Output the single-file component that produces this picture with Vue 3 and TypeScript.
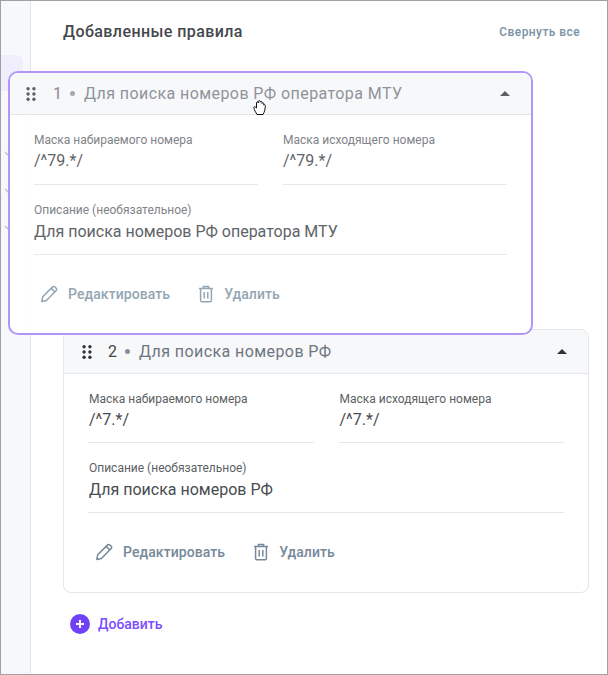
<script setup lang="ts">
interface Rule {
  id: number
  dialed: string
  outgoing: string
  description: string
  dragging: boolean
}

const rules: Rule[] = [
  { id: 1, dialed: '/^79.*/', outgoing: '/^79.*/', description: 'Для поиска номеров РФ оператора МТУ', dragging: true },
  { id: 2, dialed: '/^7.*/', outgoing: '/^7.*/', description: 'Для поиска номеров РФ', dragging: false }
]
const chevrons = [1, 2, 3]
const dots = [
  [1.5, 1.5], [6.5, 1.5], [1.5, 6], [6.5, 6], [1.5, 10.5], [6.5, 10.5]
]
</script>

<template>
  <div class="window">
    <aside class="sidebar">
      <div class="tile"></div>
      <div class="chevrons">
        <svg v-for="c in chevrons" :key="c" width="10" height="6" viewBox="0 0 10 6">
          <path d="M1 1l4 4 4-4" fill="none" stroke="#b9bec6" stroke-width="1.2" />
        </svg>
      </div>
    </aside>
    <main class="main">
      <header class="head">
        <h2 class="title">Добавленные правила</h2>
        <a class="collapse">Свернуть все</a>
      </header>
      <div class="list">
        <section v-for="r in rules" :key="r.id" class="card" :class="{ dragging: r.dragging }">
          <div class="card-head">
            <svg class="grip" width="10" height="14" viewBox="0 0 8 12">
              <circle v-for="(d, i) in dots" :key="i" :cx="d[0]" :cy="d[1]" r="1.45" />
            </svg>
            <span class="num">{{ r.id }}</span>
            <span class="dot"></span>
            <span class="name">{{ r.description }}</span>
            <span class="caret"></span>
          </div>
          <div class="card-body">
            <div class="row">
              <div class="field">
                <label>Маска набираемого номера</label>
                <div class="value">{{ r.dialed }}</div>
              </div>
              <div class="field">
                <label>Маска исходящего номера</label>
                <div class="value">{{ r.outgoing }}</div>
              </div>
            </div>
            <div class="field wide">
              <label>Описание (необязательное)</label>
              <div class="value">{{ r.description }}</div>
            </div>
            <div class="actions">
              <button class="action" type="button">
                <svg width="18" height="18" viewBox="0 0 18 18" fill="none" stroke="currentColor" stroke-width="1.5" stroke-linejoin="round">
                  <path d="M1.800 16.400l.9-4.600L12.600 1.900a1.600 1.600 0 0 1 2.300 0l1.300 1.300a1.600 1.600 0 0 1 0 2.300l-9.800 10z" />
                  <path d="M11.200 3.400l3.600 3.600" />
                </svg>
                Редактировать
              </button>
              <button class="action" type="button">
                <svg width="16" height="18" viewBox="0 0 16 18" fill="none" stroke="currentColor" stroke-width="1.5">
                  <path d="M1 3.600h14M5.400 3.400V1.600h5.200v1.800M2.600 3.800v11.600a1.400 1.400 0 0 0 1.400 1.400h8a1.400 1.400 0 0 0 1.400-1.400V3.800M6.200 7v6.600M9.800 7v6.600" />
                </svg>
                Удалить
              </button>
            </div>
          </div>
        </section>
      </div>
      <button class="add" type="button">
        <span class="plus">
          <svg width="10" height="10" viewBox="0 0 10 10">
            <path d="M5 1v8M1 5h8" stroke="#fff" stroke-width="2" />
          </svg>
        </span>
        Добавить
      </button>
      <svg class="cursor" width="14" height="17" viewBox="0 0 14 17">
        <path d="M4 15.500C3 13.500 1 11 .9 8.400c0-.9 1-1 1.500-.4L3.500 9V4c0-1.400 1.700-1.400 1.800-.1V2.600c0-1.300 1.800-1.300 1.900 0v.6c.2-1.200 1.800-1 1.800.2v1c.3-1 1.700-.8 1.700.3v1.200c.5-.7 1.600-.4 1.600.5 0 3-.6 6.500-2.300 9.100z" fill="#fff" stroke="#111" stroke-width="1" stroke-linejoin="round" />
      </svg>
    </main>
  </div>
</template>

<style scoped>
.window {
  position: relative;
  box-sizing: border-box;
  width: 608px;
  height: 675px;
  display: flex;
  overflow: hidden;
  background: #fff;
  border: 1px solid #a0a0a0;
  font-family: Roboto, "Liberation Sans", sans-serif;
}
.sidebar {
  box-sizing: content-box;
  flex: none;
  width: 29px;
  background: #f7f8fb;
  border-right: 1px solid #e1e4e9;
}
.tile {
  width: 22px;
  height: 36px;
  margin-top: 54px;
  background: #f0edfc;
  border-radius: 0 6px 6px 0;
}
.chevrons {
  display: flex;
  flex-direction: column;
  align-items: flex-start;
  gap: 31px;
  margin: 60px 0 0 3px;
}
.main {
  flex: 1;
  min-width: 0;
  padding: 0 27px 0 32px;
}
.head {
  display: flex;
  align-items: center;
  justify-content: space-between;
  height: 60px;
  width: 517px;
}
.title {
  margin: 0;
  padding-top: 1px;
  font-size: 16px;
  font-weight: 500;
  letter-spacing: 0.42px;
  line-height: 60px;
  color: #44484c;
}
.collapse {
  padding-top: 1px;
  font-size: 12px;
  font-weight: 500;
  letter-spacing: 0.42px;
  color: #7a92a5;
}
.list {
  padding-top: 268px;
}
.card {
  box-sizing: border-box;
  width: 526px;
  height: 264px;
  background: #fff;
  border: 1px solid #e4e6ea;
  border-radius: 8px;
  overflow: hidden;
}
.card-head {
  display: flex;
  align-items: center;
  height: 43px;
  padding: 0 21px 0 18px;
  background: #f7f8fa;
  border-bottom: 1px solid #e4e6ea;
  color: #5f6b76;
  font-size: 16px;
}
.grip {
  fill: #333;
  margin-right: 16px;
}
.num {
  color: #444;
  margin-right: 8px;
}
.dot {
  width: 5px;
  height: 5px;
  border-radius: 50%;
  background: #8a8f96;
  margin-right: 9px;
}
.name {
  flex: 1;
  letter-spacing: 0.42px;
  color: #6e7680;
}
.caret {
  width: 0;
  height: 0;
  border-left: 5px solid transparent;
  border-right: 5px solid transparent;
  border-bottom: 5px solid #333;
}
.card-body {
  padding: 0 24px;
}
.row {
  display: grid;
  grid-template-columns: 1fr 1fr;
  gap: 25px;
  padding-top: 16px;
}
.field {
  height: 53px;
  box-sizing: border-box;
  border-bottom: 1px solid #e6e8eb;
}
.field.wide {
  height: 54px;
  margin-top: 16px;
}
.field.wide .value {
  padding-top: 1px;
}
label {
  display: block;
  padding-left: 1px;
  font-size: 12px;
  line-height: 18px;
  color: #5c5f63;
}
.value {
  padding-left: 1px;
  font-size: 16px;
  line-height: 24px;
  color: #484b4f;
}
.actions {
  display: flex;
  gap: 28px;
  padding: 30px 0 0 7px;
}
.action {
  display: flex;
  align-items: center;
  gap: 10px;
  padding: 0;
  border: 0;
  background: none;
  font: 500 14px Roboto, "Liberation Sans", sans-serif;
  letter-spacing: 0.08px;
  color: #75899a;
}
.card.dragging {
  position: absolute;
  left: 7px;
  top: 70px;
  z-index: 2;
  width: 525px;
  height: 264px;
  background: rgba(255, 255, 255, 0.93);
  border: 2px solid #b196f7;
  border-radius: 10px;
}
.dragging .card-head {
  height: 41px;
  padding: 0 21px 0 16px;
  background: rgba(247, 248, 250, 0.95);
}
.dragging .grip { fill: #5e5e5e; margin-right: 17px; }
.dragging .num { color: #8a8a8a; }
.dragging .dot { background: #a5a9ae; }
.dragging .name { color: #8f9399; }
.dragging .caret { border-bottom-color: #5e5e5e; }
.dragging .field:not(.wide) { height: 54px; }
.dragging label { color: #808387; padding-left: 0; }
.dragging .value { color: #606367; padding-left: 0; }
.dragging .actions { padding-left: 6px; }
.dragging .action { color: #93a6b4; }
.add {
  display: flex;
  align-items: center;
  gap: 8px;
  margin: 21px 0 0 7px;
  padding: 0;
  border: 0;
  background: none;
  font: 500 14px Roboto, "Liberation Sans", sans-serif;
  color: #7c4dff;
}
.plus {
  display: flex;
  align-items: center;
  justify-content: center;
  width: 20px;
  height: 20px;
  border-radius: 50%;
  background: #6f42f5;
}
.cursor {
  position: absolute;
  left: 252px;
  top: 98px;
  z-index: 3;
}
</style>
